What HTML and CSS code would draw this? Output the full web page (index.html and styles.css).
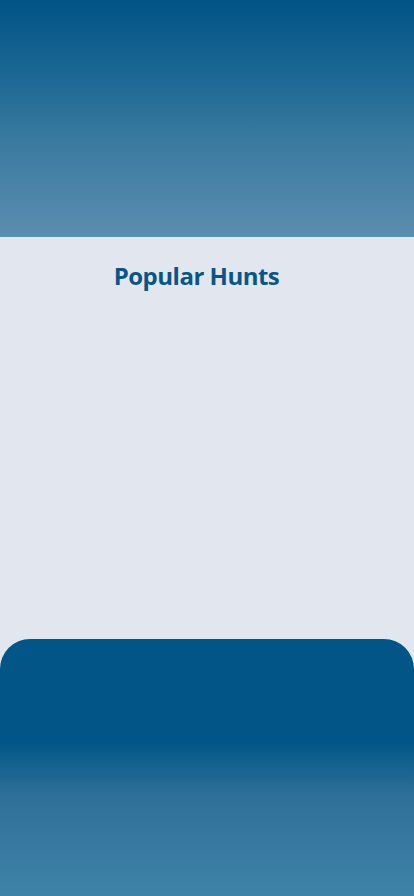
FILE: index.html
```html
<!DOCTYPE html>
<html lang="en">
<head>
<meta charset="utf-8">
<title>Popular Hunts</title>
<link rel="stylesheet" href="styles.css">
</head>
<body>
<div class="page">
  <header class="hero"></header>
  <main class="content">
    <h1 class="title">Popular Hunts</h1>
  </main>
  <footer class="panel"></footer>
</div>
</body>
</html>
```
FILE: styles.css
```css
html, body {
  margin: 0;
  padding: 0;
  background: #e2e7ef;
}
.page {
  width: 414px;
  height: 896px;
  display: flex;
  flex-direction: column;
  overflow: hidden;
  font-family: "Open Sans", "Noto Sans", sans-serif;
}
.hero {
  height: 237px;
  flex: none;
  background: linear-gradient(to bottom, #025487 0%, #1a6692 30%, #3b7aa0 60%, #5b8eb0 100%);
}
.content {
  flex: 1;
  display: flex;
  flex-direction: column;
  align-items: center;
  padding-right: 21px;
}
.title {
  margin: 22px 0 0;
  font-size: 24px;
  font-weight: 700;
  color: #0a5585;
  letter-spacing: -0.5px;
}
.panel {
  height: 257px;
  flex: none;
  border-radius: 30px 30px 0 0;
  background: linear-gradient(to bottom, #015587 0%, #015587 40%, #2d6f98 60%, #4083a8 100%);
}
```
